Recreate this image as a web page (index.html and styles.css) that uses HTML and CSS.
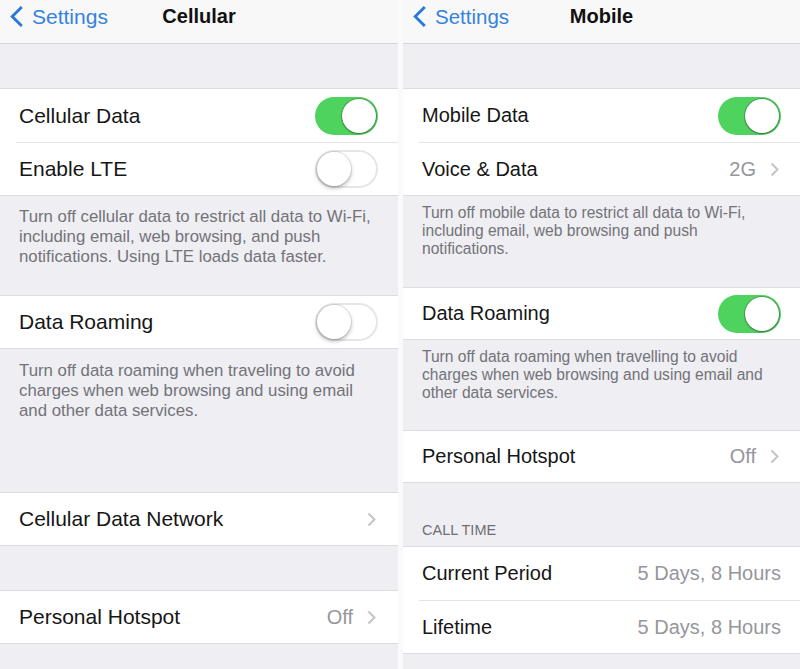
FILE: index.html
```html
<!DOCTYPE html>
<html lang="en">
<head>
    <meta charset="UTF-8">
    <meta name="viewport" content="width=device-width, initial-scale=1.0">
    <title>Cellular / Mobile Settings</title>
    <link rel="stylesheet" href="styles.css">
</head>
<body>
    <div class="screens">
        <!-- Left: iOS "Cellular" screen -->
        <section class="phone phone-left">
            <header class="nav">
                <span class="back">
                    <svg class="back-icon" viewBox="0 0 14 24"><polyline points="12,2 2,12 12,22"/></svg>
                    Settings
                </span>
                <h1 class="nav-title">Cellular</h1>
                <span class="nav-side"></span>
            </header>
            <div class="spacer"></div>

            <ul class="group">
                <li class="cell"><div class="cell-body">
                    <span class="label">Cellular Data</span>
                    <span class="switch on"><span class="knob"></span></span>
                </div></li>
                <li class="cell"><div class="cell-body">
                    <span class="label">Enable LTE</span>
                    <span class="switch"><span class="knob"></span></span>
                </div></li>
            </ul>
            <p class="footer footer-a">Turn off cellular data to restrict all data to Wi-Fi, including email, web browsing, and push notifications. Using LTE loads data faster.</p>

            <ul class="group">
                <li class="cell cell-short"><div class="cell-body">
                    <span class="label">Data Roaming</span>
                    <span class="switch"><span class="knob"></span></span>
                </div></li>
            </ul>
            <p class="footer footer-b">Turn off data roaming when traveling to avoid charges when web browsing and using email and other data services.</p>

            <ul class="group">
                <li class="cell cell-short"><div class="cell-body">
                    <span class="label">Cellular Data Network</span>
                    <svg class="chevron" viewBox="0 0 9 15"><polyline points="1.5,1.5 7.5,7.5 1.5,13.5"/></svg>
                </div></li>
            </ul>
            <div class="spacer"></div>

            <ul class="group">
                <li class="cell cell-short"><div class="cell-body">
                    <span class="label">Personal Hotspot</span>
                    <span class="value">Off</span>
                    <svg class="chevron" viewBox="0 0 9 15"><polyline points="1.5,1.5 7.5,7.5 1.5,13.5"/></svg>
                </div></li>
            </ul>
        </section>

        <div class="divider"></div>

        <!-- Right: iOS "Mobile" screen -->
        <section class="phone phone-right">
            <header class="nav">
                <span class="back">
                    <svg class="back-icon" viewBox="0 0 14 24"><polyline points="12,2 2,12 12,22"/></svg>
                    Settings
                </span>
                <h1 class="nav-title">Mobile</h1>
                <span class="nav-side"></span>
            </header>
            <div class="spacer"></div>

            <ul class="group">
                <li class="cell"><div class="cell-body">
                    <span class="label">Mobile Data</span>
                    <span class="switch on"><span class="knob"></span></span>
                </div></li>
                <li class="cell"><div class="cell-body">
                    <span class="label">Voice &amp; Data</span>
                    <span class="value">2G</span>
                    <svg class="chevron" viewBox="0 0 9 15"><polyline points="1.5,1.5 7.5,7.5 1.5,13.5"/></svg>
                </div></li>
            </ul>
            <p class="footer footer-a">Turn off mobile data to restrict all data to Wi-Fi, including email, web browsing and push notifications.</p>

            <ul class="group">
                <li class="cell cell-short"><div class="cell-body">
                    <span class="label">Data Roaming</span>
                    <span class="switch on"><span class="knob"></span></span>
                </div></li>
            </ul>
            <p class="footer footer-b">Turn off data roaming when travelling to avoid charges when web browsing and using email and other data services.</p>

            <ul class="group">
                <li class="cell cell-short"><div class="cell-body">
                    <span class="label">Personal Hotspot</span>
                    <span class="value">Off</span>
                    <svg class="chevron" viewBox="0 0 9 15"><polyline points="1.5,1.5 7.5,7.5 1.5,13.5"/></svg>
                </div></li>
            </ul>
            <h2 class="section-header">CALL TIME</h2>

            <ul class="group">
                <li class="cell"><div class="cell-body">
                    <span class="label">Current Period</span>
                    <span class="value">5 Days, 8 Hours</span>
                </div></li>
                <li class="cell"><div class="cell-body">
                    <span class="label">Lifetime</span>
                    <span class="value">5 Days, 8 Hours</span>
                </div></li>
            </ul>
        </section>
    </div>
</body>
</html>
```

FILE: styles.css
```css
* {
    box-sizing: border-box;
}

body {
    margin: 0;
    height: 669px;
    overflow: hidden;
    background-color: #fff;
    font-family: "Liberation Sans", Arial, sans-serif;
    color: #161616;
}

.screens {
    display: grid;
    grid-template-columns: 398px 5px 397px;
    height: 669px;
}

.phone {
    background-color: #eeeef3;
    overflow: hidden;
}

.divider {
    background-color: #fafafa;
}

/* navigation bar */
.nav {
    display: flex;
    align-items: center;
    height: 44px;
    padding: 0 10px 10px 10px;
    background-color: #f8f8f8;
    border-bottom: 1px solid #d6d6da;
}

.back {
    flex: 1;
    display: flex;
    align-items: center;
    gap: 8px;
    font-size: 21px;
    color: #3583dc;
}

.back-icon {
    width: 14px;
    height: 23px;
    fill: none;
    stroke: #2a78dc;
    stroke-width: 3;
}

.nav-title {
    margin: 0;
    font-size: 20px;
    font-weight: bold;
    color: #111;
}

.nav-side {
    flex: 1;
}

.spacer {
    height: 44px;
}

/* grouped table */
.group {
    list-style: none;
    margin: 0;
    padding: 0;
    background-color: #fff;
    border-top: 1px solid #dcdce0;
    border-bottom: 1px solid #dcdce0;
}

.cell {
    height: 53px;
    padding-left: 16px;
}

.cell-short {
    height: 52px;
}

.cell-body {
    display: flex;
    align-items: center;
    height: 100%;
    padding: 0 20px 0 3px;
}

.cell + .cell .cell-body {
    border-top: 1px solid #e3e3e7;
}

.label {
    flex: 1;
    font-size: 21px;
}

.value {
    font-size: 20px;
    color: #96969b;
}

.chevron {
    width: 9px;
    height: 15px;
    margin-left: 14px;
    margin-right: 2px;
    fill: none;
    stroke: #c4c4c9;
    stroke-width: 2;
}

/* switches */
.switch {
    display: flex;
    justify-content: flex-start;
    align-items: center;
    width: 63px;
    height: 38px;
    padding: 2px;
    border-radius: 19px;
    background-color: #fff;
    box-shadow: inset 0 0 0 2px #e6e6e9;
}

.switch.on {
    justify-content: flex-end;
    background-color: #4fd35f;
    box-shadow: none;
}

.knob {
    width: 34px;
    height: 34px;
    border-radius: 50%;
    background-color: #fff;
    box-shadow: 0 2px 4px rgba(0, 0, 0, 0.3), 0 0 0 1px rgba(0, 0, 0, 0.08);
}

.switch.on .knob {
    box-shadow: 0 1px 2px rgba(0, 0, 0, 0.3), 0 0 0 1px rgba(60, 90, 70, 0.35);
}

/* footers */
.footer {
    margin: 0;
    padding-left: 19px;
    padding-right: 23px;
    font-size: 16.8px;
    line-height: 20px;
    color: #737378;
}

.phone-left .footer-a {
    height: 99px;
    padding-top: 11px;
}

.phone-left .footer-b {
    height: 143px;
    padding-top: 12px;
}

/* right screen is scaled a little smaller */
.phone-right .label {
    font-size: 20px;
}

.phone-right .back {
    font-size: 20.5px;
}

.phone-right .cell-body {
    padding-right: 19px;
}

.phone-right .footer {
    padding-right: 18px;
    font-size: 15.6px;
    line-height: 18px;
}

.phone-right .footer-a {
    height: 91px;
    padding-top: 8px;
}

.phone-right .footer-b {
    height: 90px;
    padding-top: 8px;
}

.phone-right .cell-short {
    height: 51px;
}

.section-header {
    margin: 0;
    height: 63px;
    padding: 38px 0 0 19px;
    font-size: 14.5px;
    font-weight: normal;
    line-height: 18px;
    color: #6f6f74;
}
```
